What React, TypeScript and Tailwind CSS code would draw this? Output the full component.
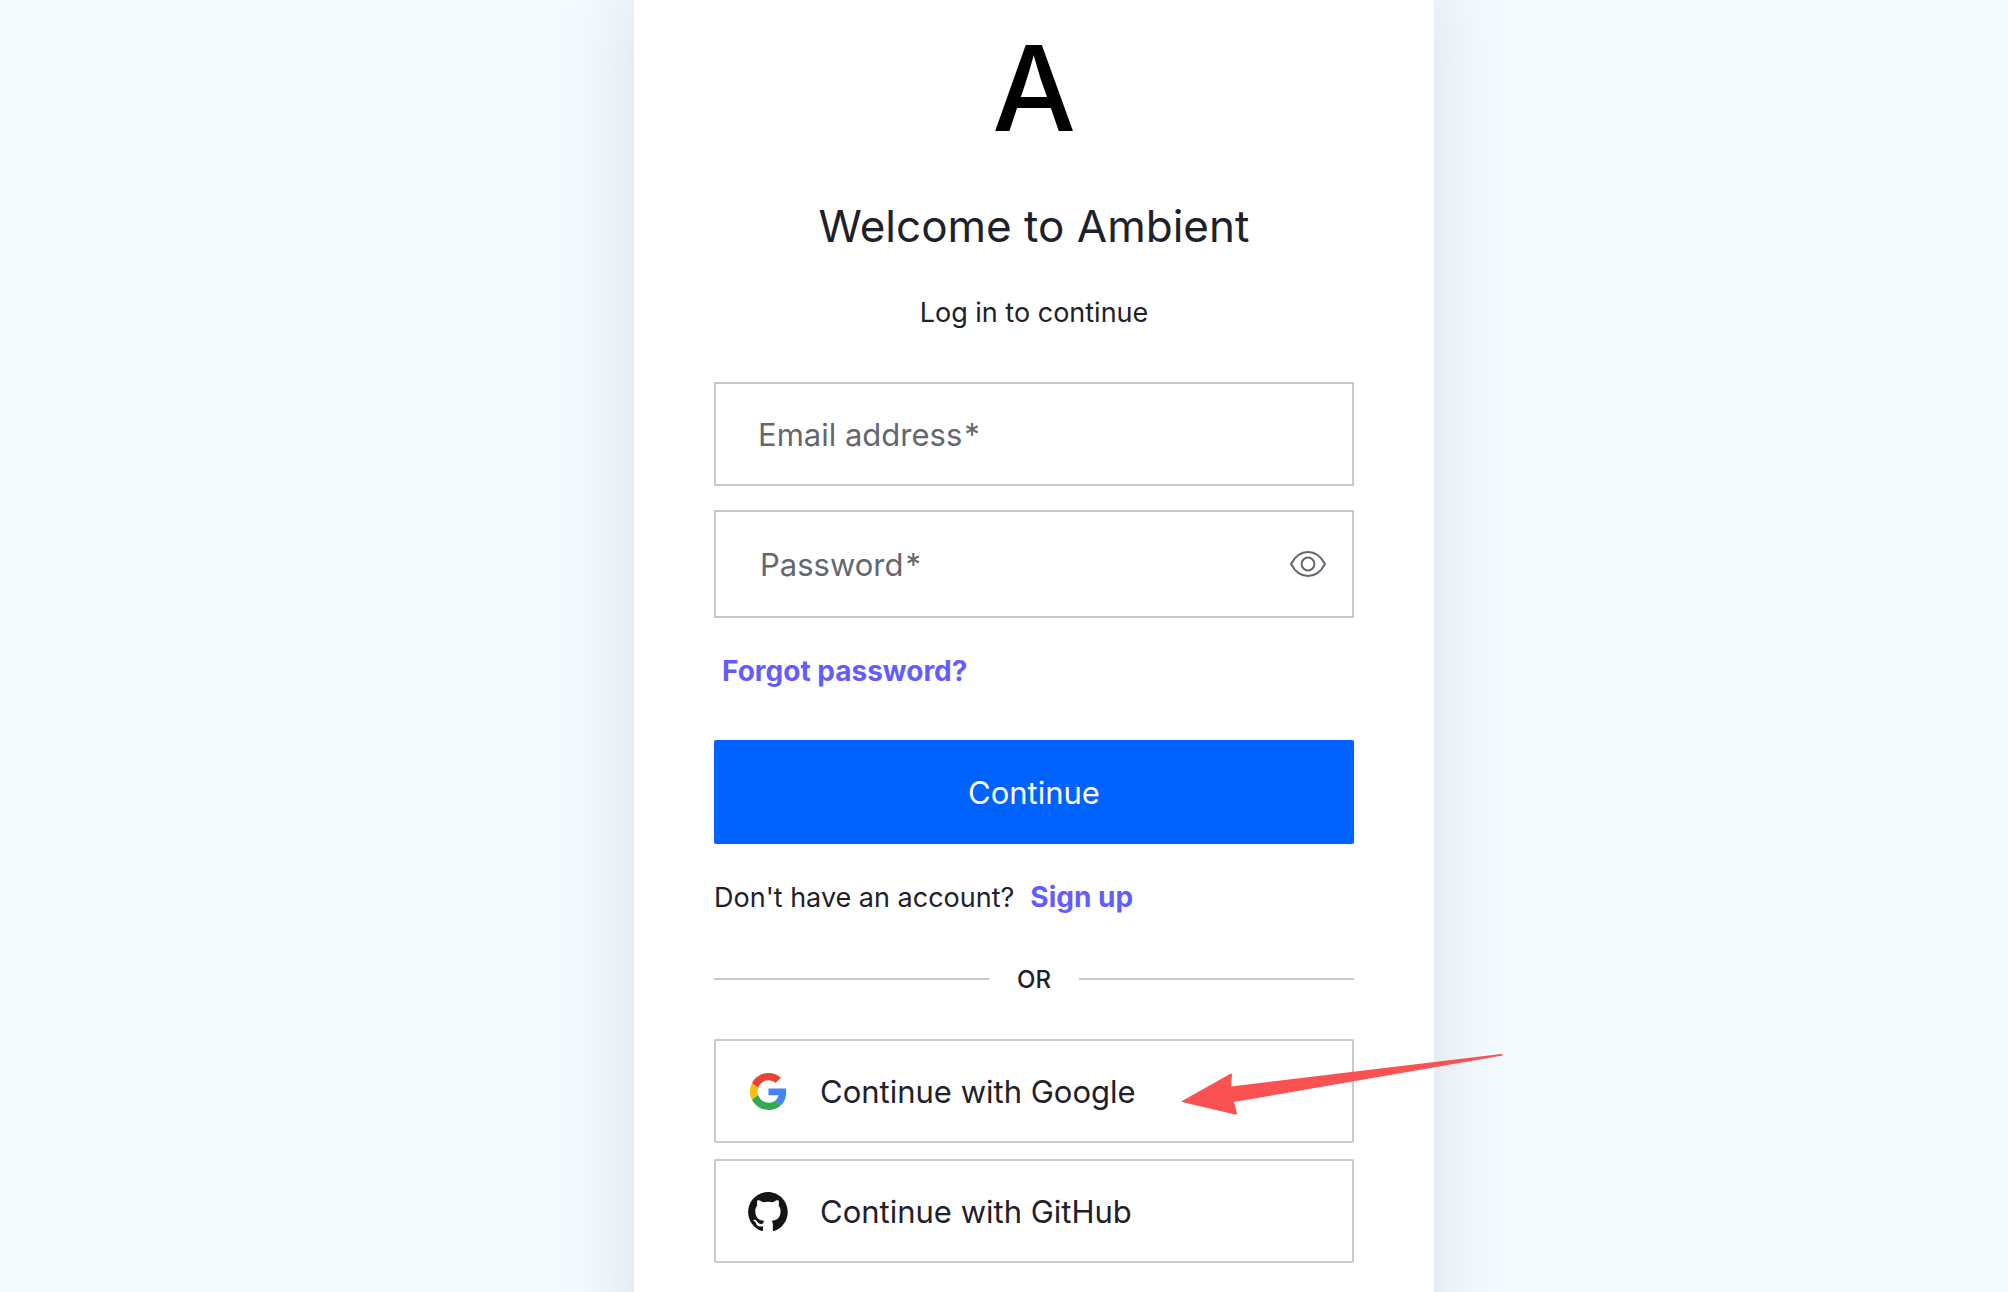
import { useState } from "react"

function EyeIcon() {
  return (
    <svg viewBox="0 0 36 26" className="h-[26px] w-9" fill="none" stroke="currentColor" strokeWidth="2" aria-hidden="true">
      <path d="M1 13C5 5.500 11 1 18 1s13 4.500 17 12c-4 7.500-10 12-17 12S5 20.500 1 13Z" strokeLinejoin="round" />
      <circle cx="18" cy="13" r="6.400" />
    </svg>
  )
}

function GoogleIcon() {
  return (
    <svg viewBox="0 0 48 48" className="h-[37px] w-[37px]" aria-hidden="true">
      <path fill="#EA4335" d="M24 9.500c3.540 0 6.710 1.220 9.210 3.600l6.850-6.850C35.900 2.380 30.470 0 24 0 14.620 0 6.510 5.380 2.560 13.220l7.980 6.190C12.430 13.720 17.740 9.500 24 9.500z" />
      <path fill="#4285F4" d="M46.980 24.550c0-1.570-.150-3.090-.380-4.550H24v9.020h12.940c-.580 2.960-2.260 5.480-4.780 7.180l7.730 6c4.510-4.180 7.090-10.360 7.090-17.650z" />
      <path fill="#FBBC05" d="M10.530 28.590c-.480-1.450-.760-2.990-.760-4.590s.270-3.140.760-4.590l-7.980-6.190C.920 16.460 0 20.120 0 24c0 3.880.920 7.540 2.560 10.780l7.970-6.190z" />
      <path fill="#34A853" d="M24 48c6.480 0 11.930-2.130 15.890-5.810l-7.730-6c-2.150 1.450-4.920 2.300-8.160 2.300-6.260 0-11.570-4.220-13.470-9.910l-7.980 6.190C6.510 42.620 14.620 48 24 48z" />
    </svg>
  )
}

function GitHubIcon() {
  return (
    <svg viewBox="0 0 98 96" className="h-[39px] w-10" aria-hidden="true">
      <path
        fill="#161514"
        fillRule="evenodd"
        clipRule="evenodd"
        d="M48.854 0C21.839 0 0 22 0 49.217c0 21.756 13.993 40.172 33.405 46.690 2.427.490 3.316-1.059 3.316-2.362 0-1.141-.080-5.052-.080-9.127-13.590 2.934-16.420-5.867-16.420-5.867-2.184-5.704-5.420-7.170-5.420-7.170-4.448-3.015.324-3.015.324-3.015 4.934.326 7.523 5.052 7.523 5.052 4.367 7.496 11.404 5.378 14.235 4.074.404-3.178 1.699-5.378 3.074-6.600-10.839-1.141-22.243-5.378-22.243-24.283 0-5.378 1.940-9.778 5.014-13.200-.485-1.222-2.184-6.275.486-13.038 0 0 4.125-1.304 13.426 5.052a46.970 46.970 0 0 1 12.214-1.630c4.125 0 8.330.571 12.213 1.630 9.302-6.356 13.427-5.052 13.427-5.052 2.670 6.763.970 11.816.485 13.038 3.155 3.422 5.015 7.822 5.015 13.200 0 18.905-11.404 23.060-22.324 24.283 1.780 1.548 3.316 4.481 3.316 9.126 0 6.600-.080 11.897-.080 13.526 0 1.304.890 2.853 3.316 2.364 19.412-6.520 33.405-24.935 33.405-46.691C97.707 22 75.788 0 48.854 0z"
      />
    </svg>
  )
}

const providers = [
  { name: "Google", icon: <GoogleIcon />, arrow: true },
  { name: "GitHub", icon: <GitHubIcon />, arrow: false },
]

export default function App() {
  const [showPassword, setShowPassword] = useState(false)
  const [email, setEmail] = useState("")
  const [password, setPassword] = useState("")

  return (
    <main className="flex h-screen items-start justify-center overflow-hidden bg-[#f5fbff] pl-15 font-['Inter',sans-serif] text-[#1e212a]">
      <section className="-mt-11 w-full max-w-[800px] bg-white p-20 shadow-[0_24px_80px_rgba(0,0,0,0.12)]">
        <header className="text-center">
          <div className="text-[118px] leading-[104px] font-medium text-black">A</div>
          <h1 className="mt-[50px] text-[44px] leading-[72px]">Welcome to Ambient</h1>
          <p className="mt-[30px] text-[27px] leading-[42px]">Log in to continue</p>
        </header>

        <form className="mt-12" onSubmit={(e) => e.preventDefault()}>
          <div className="relative">
            <input
              id="email"
              type="email"
              required
              value={email}
              onChange={(e) => setEmail(e.target.value)}
              className="block h-[104px] w-full border-2 border-[#c9c8cf] px-[42px] text-[31px] outline-none focus:border-[#635dff]"
            />
            {!email && (
              <label htmlFor="email" className="pointer-events-none absolute inset-y-0 left-11 flex items-center gap-0.5 pt-0.5 text-[31px] text-[#65676e]">
                Email address<span>*</span>
              </label>
            )}
          </div>

          <div className="relative mt-6 flex h-[108px] items-center border-2 border-[#c9c8cf] focus-within:border-[#635dff]">
            <input
              id="password"
              type={showPassword ? "text" : "password"}
              required
              value={password}
              onChange={(e) => setPassword(e.target.value)}
              className="h-full min-w-0 flex-1 px-11 text-[31px] outline-none"
            />
            {!password && (
              <label htmlFor="password" className="pointer-events-none absolute inset-y-0 left-11 flex items-center gap-0.5 pt-0.5 text-[31px] text-[#65676e]">
                Password<span>*</span>
              </label>
            )}
            <button
              type="button"
              aria-label="Show password"
              onClick={() => setShowPassword(!showPassword)}
              className="flex h-full w-[88px] items-center justify-center text-[#65676e]"
            >
              <EyeIcon />
            </button>
          </div>

          <a href="#forgot" className="mt-8 ml-2 block w-fit text-[28px] leading-[42px] font-bold text-[#635dff]">
            Forgot password?
          </a>

          <button type="submit" className="mt-12 block h-[104px] w-full rounded-xs bg-[#0062ff] pt-0.5 text-[31px] text-white">
            Continue
          </button>
        </form>

        <p className="mt-8 text-[27px] leading-[42px]">
          Don't have an account?
          <a href="#signup" className="ml-4 text-[28px] font-bold text-[#635dff]">
            Sign up
          </a>
        </p>

        <div className="mt-[39px] flex items-center gap-7 text-[24px] leading-[40px] font-medium">
          <span className="h-0.5 flex-1 bg-[#c9c8cf]" />
          <span className="pt-0.5">OR</span>
          <span className="h-0.5 flex-1 bg-[#c9c8cf]" />
        </div>

        <div className="mt-[39px] space-y-4">
          {providers.map((provider) => (
            <div key={provider.name} className="relative">
              <button
                type="button"
                className="flex h-[104px] w-full items-center gap-8 rounded-xs border-2 border-[#c9c8cf] px-8 text-left text-[31px]"
              >
                <span className="flex w-10 justify-center">{provider.icon}</span>
                <span className="pt-0.5">Continue with {provider.name}</span>
              </button>
              {provider.arrow && (
                <svg
                  viewBox="0 0 322 62"
                  className="pointer-events-none absolute top-[14px] -right-[149px] h-[62px] w-[322px]"
                  fill="#fa5252"
                  aria-hidden="true"
                >
                  <path d="M1 48 49 21Q51 20 51 22L50 33.500 320 1Q322.500 1 321.500 2.500L53 49 56 60Q56 62 54 61.500L1 49Q0 48.500 1 48Z" />
                </svg>
              )}
            </div>
          ))}
        </div>
      </section>
    </main>
  )
}
